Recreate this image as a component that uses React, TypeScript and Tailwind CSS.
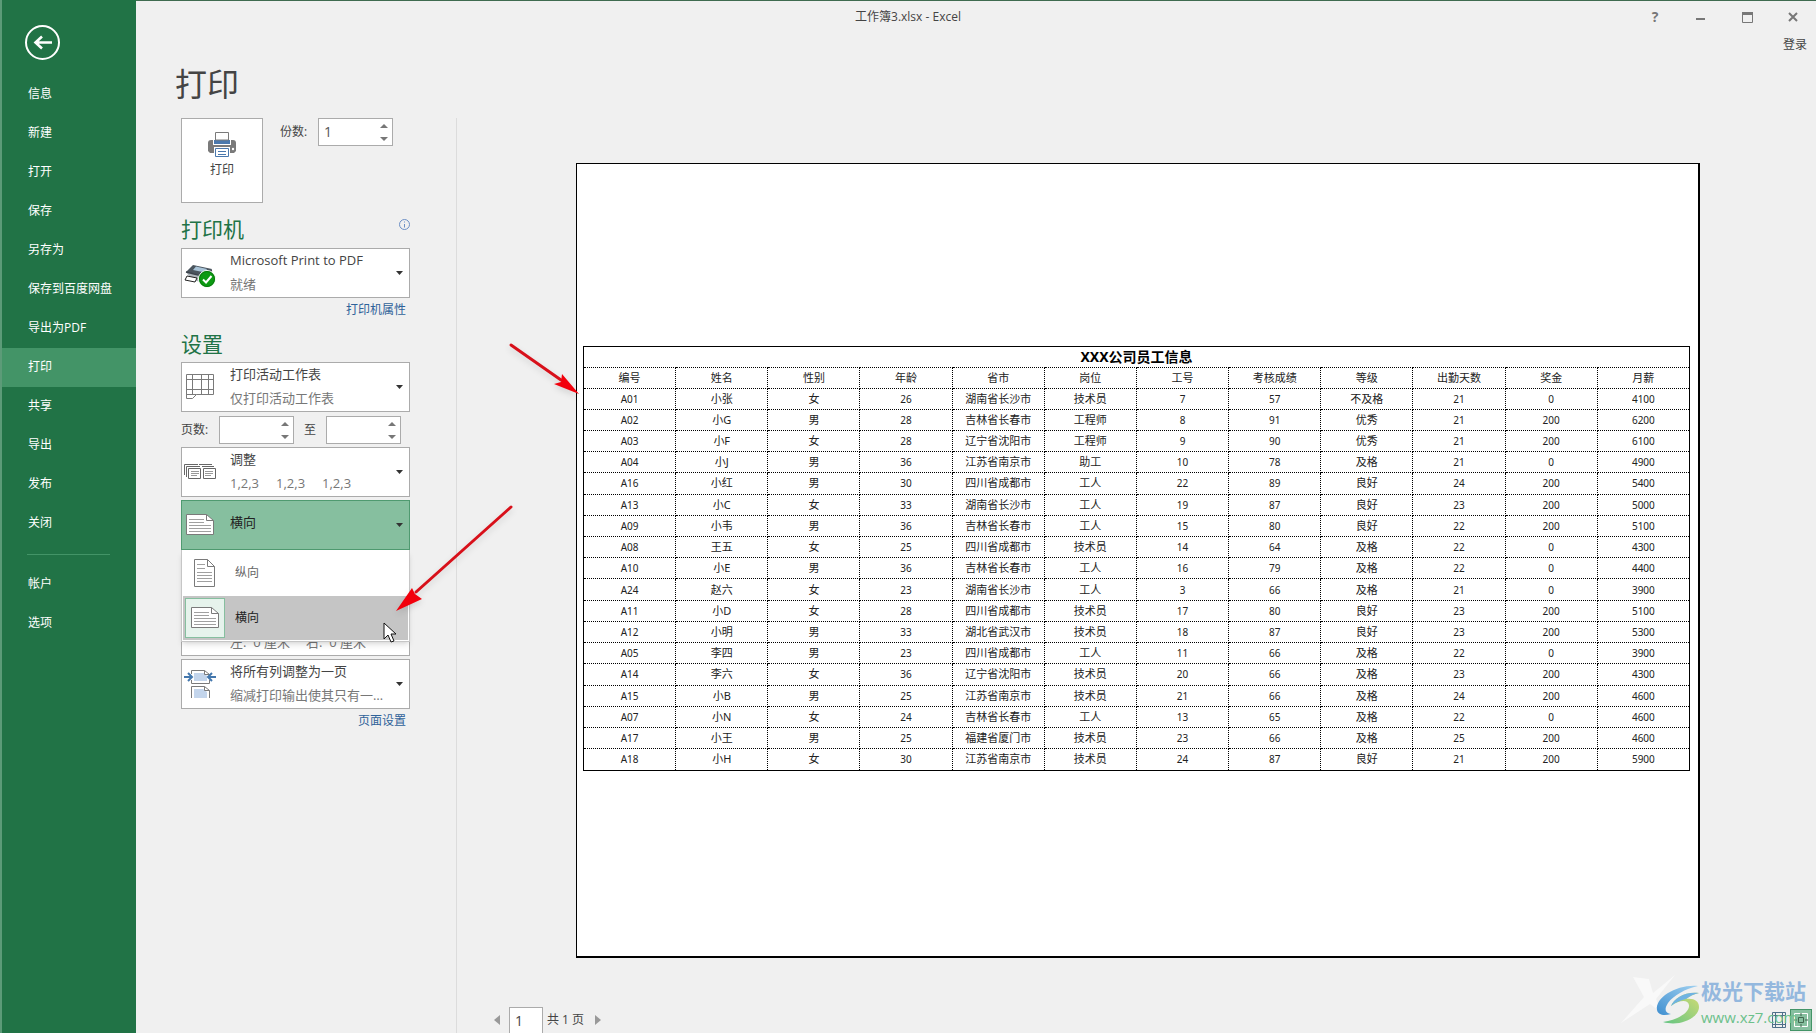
import React from "react";

const navItems = [
  "信息",
  "新建",
  "打开",
  "保存",
  "另存为",
  "保存到百度网盘",
  "导出为PDF",
  "打印",
  "共享",
  "导出",
  "发布",
  "关闭",
];

const columns = ["编号", "姓名", "性别", "年龄", "省市", "岗位", "工号", "考核成绩", "等级", "出勤天数", "奖金", "月薪"];

const employees = [
  ["A01", "小张", "女", 26, "湖南省长沙市", "技术员", 7, 57, "不及格", 21, 0, 4100],
  ["A02", "小G", "男", 28, "吉林省长春市", "工程师", 8, 91, "优秀", 21, 200, 6200],
  ["A03", "小F", "女", 28, "辽宁省沈阳市", "工程师", 9, 90, "优秀", 21, 200, 6100],
  ["A04", "小J", "男", 36, "江苏省南京市", "助工", 10, 78, "及格", 21, 0, 4900],
  ["A16", "小红", "男", 30, "四川省成都市", "工人", 22, 89, "良好", 24, 200, 5400],
  ["A13", "小C", "女", 33, "湖南省长沙市", "工人", 19, 87, "良好", 23, 200, 5000],
  ["A09", "小韦", "男", 36, "吉林省长春市", "工人", 15, 80, "良好", 22, 200, 5100],
  ["A08", "王五", "女", 25, "四川省成都市", "技术员", 14, 64, "及格", 22, 0, 4300],
  ["A10", "小E", "男", 36, "吉林省长春市", "工人", 16, 79, "及格", 22, 0, 4400],
  ["A24", "赵六", "女", 23, "湖南省长沙市", "工人", 3, 66, "及格", 21, 0, 3900],
  ["A11", "小D", "女", 28, "四川省成都市", "技术员", 17, 80, "良好", 23, 200, 5100],
  ["A12", "小明", "男", 33, "湖北省武汉市", "技术员", 18, 87, "良好", 23, 200, 5300],
  ["A05", "李四", "男", 23, "四川省成都市", "工人", 11, 66, "及格", 22, 0, 3900],
  ["A14", "李六", "女", 36, "辽宁省沈阳市", "技术员", 20, 66, "及格", 23, 200, 4300],
  ["A15", "小B", "男", 25, "江苏省南京市", "技术员", 21, 66, "及格", 24, 200, 4600],
  ["A07", "小N", "女", 24, "吉林省长春市", "工人", 13, 65, "及格", 22, 0, 4600],
  ["A17", "小王", "男", 25, "福建省厦门市", "技术员", 23, 66, "及格", 25, 200, 4600],
  ["A18", "小H", "女", 30, "江苏省南京市", "技术员", 24, 87, "良好", 21, 200, 5900],
];

const PrinterIcon = () => (
  <svg width="28" height="26" viewBox="0 0 28 26">
    <path d="M3 8h22a3 3 0 0 1 3 3v8l-2 2H2l-2-2v-8a3 3 0 0 1 3-3z" fill="#7a7a7a" />
    <path d="M5 7h18v6H5z" fill="#fff" />
    <path d="M6 8h16v4H6z" fill="#4a78ad" />
    <path d="M7.500.5h13V8h-13z" fill="#fff" stroke="#7a7a7a" />
    <path d="M6 15h16v6H6z" fill="#fff" />
    <path d="M7.500 16.500h13v8h-13z" fill="#fff" stroke="#4a78ad" />
    <path d="M10 19.500h8M10 22.500h8" stroke="#4a78ad" />
    <circle cx="25" cy="17" r="1.200" fill="#fff" />
  </svg>
);

const DeviceIcon = () => (
  <svg width="32" height="34" viewBox="0 -6 32 34">
    <path d="M2 10 9 3l19 4-3 7-14-1z" fill="#4b555e" />
    <path d="M9 8l3-3.500 11 2.500-2 3.500z" fill="#a9c4d8" />
    <path d="M2 10l14 3 11-4v6l-10 5-9-2z" fill="#aeb5bb" />
    <path d="M2 10l14 3.500 12-5" fill="none" stroke="#3c444c" strokeWidth="1.500" />
    <path d="M3 14l10 2-2 4-10-2z" fill="#fff" stroke="#222" />
    <circle cx="23" cy="17" r="8.500" fill="#0c9a12" stroke="#fff" />
    <circle cx="23" cy="17" r="7.500" fill="none" stroke="#087a0c" />
    <path d="M19 17.500l3 3 5.500-6.500" fill="none" stroke="#fff" strokeWidth="2" />
  </svg>
);

const SheetIcon = () => (
  <svg width="32" height="26" viewBox="0 0 32 26" fill="none" stroke="#7a7a7a">
    <path d="M2.500.5h27v20h-17l-4 4h-6z" fill="#fff" />
    <path d="M2.500 5.500h27M2.500 15.500h27M2.500 20.500h10M8.500.5v20M17.500.5v20M24.500.5v20" />
  </svg>
);

const CollateIcon = () => (
  <svg width="32" height="16" viewBox="0 0 32 16" fill="none" stroke="#666">
    <path d="M.5 11V.5H14M2.500 13V2.500H16M15 .5h13M18 2.500h12" />
    <path d="M4.500 4.500h12v10h-12zM19.500 4.500h12v10h-12z" fill="#fff" />
    <path d="M7 7.500h8M7 9.500h8M7 11.500h6M21 7.500h8M21 9.500h8M21 11.500h6" stroke="#999" />
  </svg>
);

const LandscapeIcon = () => (
  <svg width="28" height="22" viewBox="0 0 28 22" fill="none" stroke="#7a7a7a">
    <path d="M.5.5h20l7 6v14H.5z" fill="#fff" />
    <path d="M20.500.5v6h7" />
    <path d="M3 5.500h15M3 8.500h15M3 11.500h22M3 14.500h22M3 17.500h22" stroke="#a0a0a0" />
  </svg>
);

const PortraitIcon = () => (
  <svg width="22" height="28" viewBox="0 0 22 28" fill="none" stroke="#7a7a7a">
    <path d="M.5.5h13l7 7v20H.5z" fill="#fff" />
    <path d="M13.500.5v7h7" />
    <path d="M3 5.500h8M3 9.500h8M3 13.500h15M3 16.500h15M3 19.500h15M3 22.500h15" stroke="#a0a0a0" />
  </svg>
);

const FitIcon = () => (
  <svg width="32" height="28" viewBox="0 0 32 28" fill="none">
    <path d="M7.500 4V.5h13l5 4M7.500 10v3.500h18V10" stroke="#7a7a7a" />
    <path d="M10 3h10l3 3v5H10z" fill="#c3d5ec" />
    <path d="M20.500.5v4h5" stroke="#7a7a7a" />
    <path d="M0 7h7M4 3l4 4-4 4M32 7h-7M28 3l-4 4 4 4" stroke="#4377ad" strokeWidth="2" />
    <path d="M7.500 28V16.500h13l5 4V28" stroke="#7a7a7a" fill="#fff" />
    <path d="M10 19h9l4 3v6H10z" fill="#c3d5ec" />
    <path d="M20.500 16.500v4h5" stroke="#7a7a7a" />
  </svg>
);

const Caret = () => (
  <svg width="7" height="4" viewBox="0 0 7 4" className="shrink-0">
    <path d="M0 0h7L3.500 4z" fill="#333" />
  </svg>
);

type SpinProps = { id: string; label: string; value?: string };

const SpinBox = ({ id, label, value = "" }: SpinProps) => (
  <div className="flex h-7 w-[75px] border border-[#ababab] bg-white">
    <input
      id={id}
      aria-label={label}
      defaultValue={value}
      className="w-0 flex-1 pl-[5px] text-sm text-[#555] outline-none"
    />
    <div className="flex w-4 flex-col items-center justify-around">
      <button aria-label={label + " +"}>
        <svg width="8" height="4" viewBox="0 0 8 4">
          <path d="M0 4h8L4 0z" fill="#777" />
        </svg>
      </button>
      <button aria-label={label + " -"}>
        <svg width="8" height="4" viewBox="0 0 8 4">
          <path d="M0 0h8L4 4z" fill="#777" />
        </svg>
      </button>
    </div>
  </div>
);

type ComboProps = {
  label: string;
  value?: string;
  detail?: React.ReactNode;
  icon?: React.ReactNode;
  active?: boolean;
};

const Combo = ({ label, value, detail, icon, active }: ComboProps) => (
  <div
    className={
      active
        ? "flex h-[50px] items-center border border-[#4f9a70] bg-[#86bf9f] pr-1.5 text-[#222]"
        : "flex h-[50px] items-center border border-[#ababab] bg-white pr-1.5 text-[#444]"
    }
  >
    <div className="flex w-9 shrink-0 justify-center">{icon}</div>
    <div
      className={
        active
          ? "ml-3 flex min-w-0 flex-1 flex-col pb-1.5 text-[13px] leading-6"
          : "ml-3 flex min-w-0 flex-1 flex-col pb-0.5 text-[13px] leading-6"
      }
    >
      <select aria-label={label} className="h-6 w-full appearance-none outline-none">
        <option>{value}</option>
      </select>
      {detail && <div className="truncate text-[#777]">{detail}</div>}
    </div>
    <Caret />
  </div>
);

const Sidebar = () => (
  <nav className="flex w-[136px] shrink-0 flex-col border-l-2 border-[#5c9b78] bg-[#217346] text-xs text-white">
    <button aria-label="返回" className="mt-[25px] ml-[23px] h-[35px] w-[35px]">
      <svg width="35" height="35" viewBox="0 0 35 35" fill="none" stroke="#fff" strokeWidth="2">
        <circle cx="17.500" cy="17.500" r="16.500" />
        <path d="M27 17.500H11M17 11.500l-6.500 6 6.500 6" strokeWidth="2.600" />
      </svg>
    </button>
    <ul className="mt-[15px]">
      {navItems.map((item) => (
        <li key={item}>
          <a
            href="#"
            className={
              item === "打印"
                ? "flex h-[39px] items-center bg-[#439467] pb-0.5 pl-[26px]"
                : "flex h-[39px] items-center pb-0.5 pl-[26px]"
            }
          >
            {item}
          </a>
        </li>
      ))}
    </ul>
    <hr className="mt-[11px] mr-[26px] mb-[9px] ml-[25px] border-[#439467]" />
    <a href="#" className="flex h-[39px] items-center pl-[26px]">
      帐户
    </a>
    <a href="#" className="flex h-[39px] items-center pl-[26px]">
      选项
    </a>
  </nav>
);

const TitleBar = () => (
  <header className="text-xs text-[#444]">
    <div className="flex h-8 items-center">
      <div className="w-12" />
      <p className="flex-1 text-center">工作簿3.xlsx - Excel</p>
      <div className="flex text-[#777]">
        <button className="h-8 w-[46px] text-sm font-bold">?</button>
        <button aria-label="最小化" className="flex h-8 w-[46px] items-center justify-center">
          <svg width="10" height="10" viewBox="0 0 10 10">
            <path d="M0 7h9" stroke="#777" strokeWidth="2" />
          </svg>
        </button>
        <button aria-label="最大化" className="flex h-8 w-[46px] items-center justify-center">
          <svg width="11" height="11" viewBox="0 0 11 11" fill="none" stroke="#777">
            <path d="M.5.5h10v10H.5z" />
            <path d="M0 1.500h11" strokeWidth="3" />
          </svg>
        </button>
        <button aria-label="关闭窗口" className="flex h-8 w-[46px] items-center justify-center">
          <svg width="10" height="10" viewBox="0 0 10 10">
            <path d="M1 1l8 8M9 1l-8 8" stroke="#777" strokeWidth="2" />
          </svg>
        </button>
      </div>
    </div>
    <div className="flex h-[23px] items-center justify-end pr-[9px]">
      <a href="#">登录</a>
    </div>
  </header>
);

const OrientationMenu = () => (
  <div className="absolute inset-x-0 top-full z-10 border border-t-0 border-[#c6c6c6] bg-white p-px pt-0 text-xs text-[#666] shadow-md">
    <button className="flex h-[46px] w-full items-center">
      <span className="flex w-11 justify-center">
        <PortraitIcon />
      </span>
      <span className="ml-2">纵向</span>
    </button>
    <button className="flex h-11 w-full items-center bg-[#c5c5c5] text-[#222]">
      <span className="ml-0.5 flex h-10 w-10 items-center justify-center border border-[#86bf9f] bg-[#e6f3ec]">
        <LandscapeIcon />
      </span>
      <span className="ml-2.5">横向</span>
    </button>
    <svg width="14" height="22" viewBox="0 0 14 22" className="absolute top-[72px] right-3">
      <path d="M1 1v16l4-4 3 7 3-1-3-7h5z" fill="#fff" stroke="#111" />
    </svg>
  </div>
);

const Settings = () => (
  <section className="w-[229px] text-xs text-[#444]">
    <div className="flex">
      <button className="flex h-[85px] w-[82px] flex-col items-center border border-[#ababab] bg-white pt-[13px]">
        <PrinterIcon />
        <span className="mt-1">打印</span>
      </button>
      <div className="ml-[17px] flex h-7 items-center">
        <label htmlFor="copies" className="w-[38px]">
          份数:
        </label>
        <SpinBox id="copies" label="份数" value="1" />
      </div>
    </div>

    <div className="mt-3 flex h-[33px] justify-between">
      <h2 className="text-[21px] leading-7 text-[#217346]">打印机</h2>
      <svg width="11" height="11" viewBox="0 0 11 11" fill="none" stroke="#6c8fc4" className="mt-1">
        <circle cx="5.500" cy="5.500" r="5" />
        <path d="M5.500 5v3.500M5.500 2.500v1" />
      </svg>
    </div>
    <Combo label="打印机" value="Microsoft Print to PDF" detail="就绪" icon={<DeviceIcon />} />
    <div className="flex h-6 items-center justify-end pr-1">
      <a href="#" className="text-[#2f6299]">
        打印机属性
      </a>
    </div>

    <h2 className="mt-2 h-8 text-[21px] leading-7 text-[#217346]">设置</h2>
    <Combo label="打印范围" value="打印活动工作表" detail="仅打印活动工作表" icon={<SheetIcon />} />
    <div className="mt-1 flex h-7 items-center">
      <label htmlFor="from" className="w-[38px]">
        页数:
      </label>
      <SpinBox id="from" label="起始页" />
      <label htmlFor="to" className="w-8 text-center">
        至
      </label>
      <SpinBox id="to" label="结束页" />
    </div>

    <div className="mt-[3px] flex flex-col gap-[3px]">
      <Combo
        label="调整"
        value="调整"
        icon={<CollateIcon />}
        detail={
          <div className="flex gap-[17px]">
            <span>1,2,3</span>
            <span>1,2,3</span>
            <span>1,2,3</span>
          </div>
        }
      />
      <div className="relative">
        <Combo label="方向" value="横向" icon={<LandscapeIcon />} active />
        <OrientationMenu />
      </div>
      <Combo label="纸张大小" />
      <Combo
        label="边距"
        detail={
          <div className="flex gap-4">
            <span>左: &nbsp;0 厘米</span>
            <span>右: &nbsp;0 厘米</span>
          </div>
        }
      />
      <Combo label="缩放" value="将所有列调整为一页" detail="缩减打印输出使其只有一个页面宽" icon={<FitIcon />} />
    </div>
    <div className="flex h-6 items-center justify-end pr-1">
      <a href="#" className="text-[#2f6299]">
        页面设置
      </a>
    </div>
  </section>
);

const EmployeeTable = () => (
  <table className="h-[425px] w-full table-fixed border-collapse border border-black text-center text-[11px] leading-4 text-[#222]">
    <thead>
      <tr className="h-[21px]">
        <th colSpan={12} className="p-0 text-sm leading-4 font-bold text-black">
          XXX公司员工信息
        </th>
      </tr>
      <tr className="h-[21px]">
        {columns.map((name) => (
          <th key={name} className="border border-dotted border-black p-0 font-normal">
            {name}
          </th>
        ))}
      </tr>
    </thead>
    <tbody>
      {employees.map((row) => (
        <tr key={row[0]}>
          {row.map((cell, i) => (
            <td
              key={i}
              className={
                i === 0 || typeof cell === "number"
                  ? "border border-dotted border-black p-0 text-[10px]"
                  : "border border-dotted border-black p-0"
              }
            >
              {cell}
            </td>
          ))}
        </tr>
      ))}
    </tbody>
  </table>
);

const Watermark = () => (
  <div className="pointer-events-none absolute right-[10px] bottom-1 flex items-end">
    <svg width="86" height="56" viewBox="0 0 86 56">
      <defs>
        <linearGradient id="wave" x1="0" y1="1" x2="1" y2="0">
          <stop offset="0" stopColor="#3f8fd0" />
          <stop offset="1" stopColor="#9fd0f0" />
        </linearGradient>
        <linearGradient id="leaf" x1="0" y1="1" x2="1" y2="0">
          <stop offset="0" stopColor="#62c483" />
          <stop offset="1" stopColor="#d3dc74" />
        </linearGradient>
      </defs>
      <path d="M14 4l16 2 4 14L56 2 37 26l6 14-12-9L2 50l23-26z" fill="#f9f9f9" />
      <path d="M79 13C59 11 36 24 38 37c1 5 7 6 14 4-6-1-7-5-3-11 6-8 17-14 30-17z" fill="url(#wave)" />
      <path d="M80 20c-13-2-25 5-28 13 8-6 17-7 18-1 1 8-12 15-26 17 17 5 36-4 36-15 0-6-5-9-13-8 4-3 8-5 13-6z" fill="url(#leaf)" />
      <path d="M80 20c-13-2-25 5-28 13 5-4 10-6 15-7 4-3 8-5 13-6z" fill="#6fb3e2" />
    </svg>
    <div className="ml-[-4px]">
      <p className="text-[21px] leading-7 font-bold text-[#94b8de]">极光下载站</p>
      <p className="text-[15px] leading-6 font-medium text-[#6cc08b]">www.xz7.com</p>
    </div>
  </div>
);

const Arrows = () => (
  <svg
    width="190"
    height="275"
    viewBox="0 0 190 275"
    className="pointer-events-none absolute top-[340px] left-[256px] z-20 drop-shadow-md"
    fill="#f2000c"
  >
    <path d="M119 4l50 35" stroke="#d8101a" strokeWidth="3" strokeLinecap="round" />
    <path d="M187 53l-25-10 7-2 1-8z" />
    <path d="M119 166L24 251" stroke="#d8101a" strokeWidth="3" strokeLinecap="round" />
    <path d="M4 270l16-23 3 6 7 5z" />
  </svg>
);

const App = () => {
  return (
    <div className="relative flex h-screen overflow-hidden bg-[#f0f0f0] font-['Open_Sans','Noto_Sans_CJK_SC',sans-serif]">
      <Sidebar />
      <main className="relative flex min-w-0 flex-1 flex-col border-t border-[#3f6b50]">
        <TitleBar />
        <h1 className="ml-[39px] h-[62px] text-[32px] leading-[56px] text-[#444]">打印</h1>
        <div className="flex min-h-0 flex-1">
          <div className="w-[321px] shrink-0 border-r border-[#dcdcdc] pl-[45px]">
            <Settings />
          </div>
          <div className="flex min-w-0 flex-1 flex-col">
            <div className="mt-[45px] mr-[116px] ml-[119px] flex aspect-[1124/795] flex-col justify-center border border-r-2 border-b-2 border-black bg-white px-1.5 pr-2 pb-1 font-['Noto_Sans','Noto_Sans_CJK_SC',sans-serif]">
              <EmployeeTable />
            </div>
            <footer className="mt-auto flex h-[26px] items-center pl-[37px] text-xs text-[#444]">
              <button aria-label="上一页">
                <svg width="6" height="10" viewBox="0 0 6 10">
                  <path d="M6 0v10L0 5z" fill="#999" />
                </svg>
              </button>
              <input
                aria-label="当前页"
                defaultValue="1"
                className="ml-[9px] h-full w-[34px] border border-b-0 border-[#ababab] bg-white pl-[5px] text-sm outline-none"
              />
              <span className="mx-1 w-10">共 1 页</span>
              <button aria-label="下一页" className="ml-1">
                <svg width="6" height="10" viewBox="0 0 6 10">
                  <path d="M0 0v10l6-5z" fill="#999" />
                </svg>
              </button>
              <button aria-label="显示边距" className="mr-1 ml-auto">
                <svg width="14" height="16" viewBox="0 0 14 16" fill="none" stroke="#4f6f8a">
                  <path d="M.5.5h13v15H.5zM3.500 0v16M10.500 0v16M0 3.500h14M0 12.500h14" />
                </svg>
              </button>
              <button
                aria-label="缩放到页面"
                className="mr-1 flex h-[22px] w-[22px] items-center justify-center border border-[#439467] bg-[#86bf9f]"
              >
                <svg width="14" height="14" viewBox="0 0 14 14" fill="none" stroke="#41664f">
                  <path d="M.5.5h13v13H.5z" stroke="#fff" />
                  <path d="M4.500 4.500h5v5h-5zM7 0v3M7 11v3M0 7h3M11 7h3" />
                </svg>
              </button>
            </footer>
          </div>
        </div>
        <Arrows />
        <Watermark />
      </main>
    </div>
  );
};

export default App;
